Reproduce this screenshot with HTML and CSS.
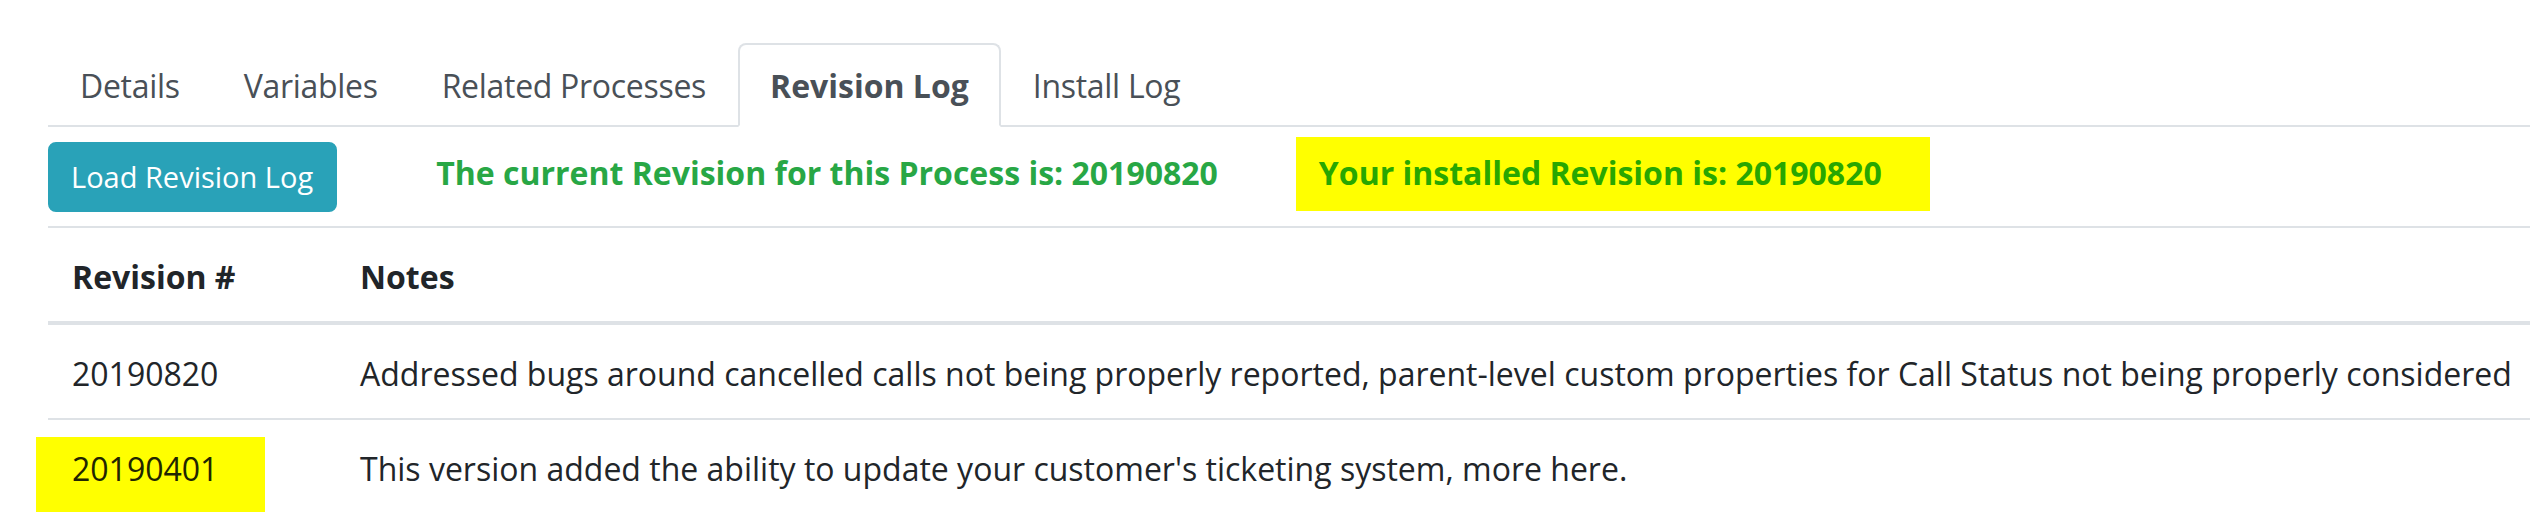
FILE: index.html
```html
<!DOCTYPE html>
<html lang="en">
<head>
<meta charset="utf-8">
<title>Revision Log</title>
<link rel="stylesheet" href="styles.css">
</head>
<body>
<div class="page">
  <ul class="nav-tabs">
    <li><a class="tab">Details</a></li>
    <li><a class="tab">Variables</a></li>
    <li><a class="tab">Related Processes</a></li>
    <li><a class="tab active">Revision Log</a></li>
    <li><a class="tab">Install Log</a></li>
  </ul>
  <div class="pane">
    <div class="actions">
      <button class="btn-info" type="button">Load Revision Log</button>
      <span class="rev-current">The current Revision for this Process is: 20190820</span>
      <span class="rev-installed"><span class="hl hl-installed">Your installed Revision is: 20190820</span></span>
    </div>
    <table class="log">
      <thead>
        <tr>
          <th class="col-rev">Revision #</th>
          <th class="col-notes">Notes</th>
        </tr>
      </thead>
      <tbody>
        <tr>
          <td class="col-rev">20190820</td>
          <td class="col-notes">Addressed bugs around cancelled calls not being properly reported, parent-level custom properties for Call Status not being properly considered</td>
        </tr>
        <tr>
          <td class="col-rev"><span class="hl hl-rev">20190401</span></td>
          <td class="col-notes">This version added the ability to update your customer's ticketing system, more here.</td>
        </tr>
      </tbody>
    </table>
  </div>
</div>
</body>
</html>
```

FILE: styles.css
```css
html, body {
  margin: 0;
  padding: 0;
  background: #ffffff;
  overflow: hidden;
}

body {
  font-family: "Open Sans", "Noto Sans", sans-serif;
  font-size: 32px;
  line-height: 48px;
  color: #212529;
}

.page {
  padding: 43px 0 0 48px;
}

/* ---------- tabs ---------- */
.nav-tabs {
  display: flex;
  list-style: none;
  margin: 0;
  padding: 0;
  border-bottom: 2px solid #dee2e6;
}

.nav-tabs li {
  margin-bottom: -2px;
}

.tab {
  display: block;
  padding: 17px 30px 15px;
  border: 2px solid transparent;
  border-radius: 8px 8px 0 0;
  color: #495057;
  font-size: 32px;
  line-height: 48px;
  letter-spacing: -0.3px;
  cursor: pointer;
}

.tab.active {
  font-weight: 700;
  letter-spacing: 0;
  background: #ffffff;
  border-color: #dee2e6 #dee2e6 #ffffff;
}

/* ---------- pane ---------- */
.pane {
  padding-top: 15px;
}

.actions {
  display: flex;
  align-items: flex-start;
}

.btn-info {
  font-family: "Open Sans", "Noto Sans", sans-serif;
  font-size: 29px;
  line-height: 44px;
  padding: 11px 22px 11px 21px;
  color: #ffffff;
  background: #29a2b8;
  border: 2px solid #29a2b8;
  border-radius: 8px;
  margin: 0;
}

.rev-current,
.rev-installed {
  font-weight: 700;
  font-size: 32px;
  line-height: 48px;
  margin-top: 7px;
  white-space: nowrap;
}

.rev-current {
  color: #28a745;
  margin-left: 99px;
}

.rev-installed {
  color: #28a700;
  margin-left: 101px;
}

/* highlighter marks (annotation overlay, does not affect flow) */
.hl {
  display: inline-block;
  background: #ffff00;
}

.hl-installed {
  padding: 12px 48px 14px 23px;
  margin: -12px -48px -14px -23px;
}

.hl-rev {
  color: #212500;
  padding: 8px 47px 19px 36px;
  margin: -8px -47px -19px -36px;
}

/* ---------- table ---------- */
.log {
  margin-top: 14px;
  width: 100%;
  border-collapse: separate;
  border-spacing: 0;
}

.log th,
.log td {
  text-align: left;
  vertical-align: top;
  padding: 25px 24px 20px;
  white-space: nowrap;
  font-size: 32px;
  line-height: 48px;
}

.log th {
  font-weight: 700;
  border-top: 2px solid #dee2e6;
  border-bottom: 4px solid #dee2e6;
}

.log tbody tr + tr td {
  border-top: 2px solid #dee2e6;
}

.log .col-rev {
  width: 240px;
  min-width: 240px;
}

.log .col-notes {
  padding-right: 0;
}
```
